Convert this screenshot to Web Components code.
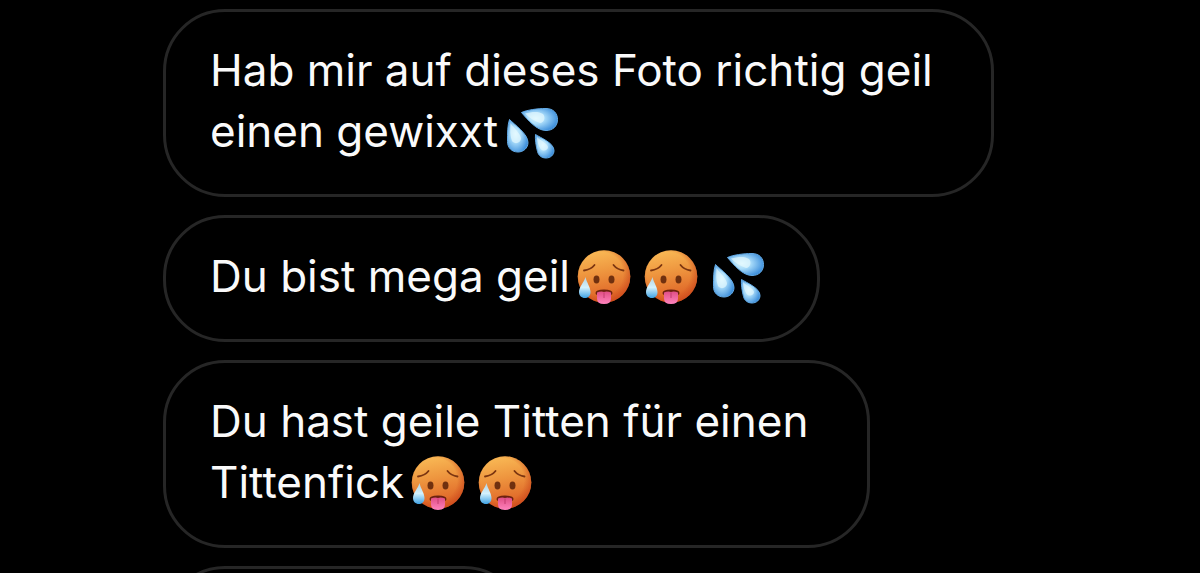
<!DOCTYPE html>
<html lang="de">
<head>
<meta charset="utf-8">
<meta name="viewport" content="width=device-width, initial-scale=1">
<title>Chat</title>
<style>
  body {
    margin: 0;
    background: #000;
    color: #fafafa;
    font-family: Inter, "Liberation Sans", sans-serif;
    overflow: hidden;
  }
</style>
</head>
<body>
<message-list>
  <message-bubble>Hab mir auf dieses Foto richtig geil&nbsp;<br>einen gewixxt<chat-emoji name="drops"></chat-emoji></message-bubble>
  <message-bubble>Du bist mega geil<chat-emoji name="hot"></chat-emoji><chat-emoji name="hot"></chat-emoji><chat-emoji name="drops"></chat-emoji></message-bubble>
  <message-bubble>Du hast geile Titten für einen&nbsp;<br>Tittenfick<chat-emoji name="hot"></chat-emoji><chat-emoji name="hot"></chat-emoji></message-bubble>
  <message-bubble class="next"></message-bubble>
</message-list>

<script>
const emojis = {
  hot: {
    label: '🥵',
    svg: /*html*/ `
      <defs>
        <linearGradient id="skin" x1="0.4" y1="0" x2="0.6" y2="1">
          <stop offset="0" stop-color="#f9b955" />
          <stop offset="0.4" stop-color="#ee963f" />
          <stop offset="1" stop-color="#dc5a22" />
        </linearGradient>
        <radialGradient id="rim" cx="0.45" cy="0.45" r="0.55">
          <stop offset="0.75" stop-color="#c8441a" stop-opacity="0" />
          <stop offset="1" stop-color="#c8441a" stop-opacity="0.55" />
        </radialGradient>
        <linearGradient id="tongue" x1="0" y1="0" x2="0" y2="1">
          <stop offset="0" stop-color="#e04f86" />
          <stop offset="1" stop-color="#ff83bd" />
        </linearGradient>
        <linearGradient id="sweat" x1="0" y1="0" x2="0" y2="1">
          <stop offset="0" stop-color="#b5d3e0" />
          <stop offset="0.5" stop-color="#d3f1fd" />
          <stop offset="1" stop-color="#3fa2e4" />
        </linearGradient>
      </defs>
      <circle cx="27" cy="26.500" r="26.300" fill="url(#skin)" />
      <circle cx="27" cy="26.500" r="26.300" fill="url(#rim)" />
      <path d="M7 20.500Q14 19.500 17.500 15M36.500 15Q40 19.500 46.500 20.500" fill="none" stroke="#7b3511" stroke-width="1.800" stroke-linecap="round" />
      <ellipse cx="19.500" cy="29.500" rx="3" ry="3.900" fill="#70300f" />
      <ellipse cx="34.500" cy="29.500" rx="3" ry="3.900" fill="#70300f" />
      <path d="M18.500 43Q18.500 39.500 27 39.500T35.500 43Q35.500 45 33.500 45H20.500Q18.500 45 18.500 43Z" fill="#6c210e" />
      <path d="M20 42.500Q24 41 27 42Q30 41 34 42.500V48.500Q34 54 27 54T20 48.500Z" fill="url(#tongue)" />
      <path d="M27 42.500V48" stroke="#c43c70" stroke-width="1" />
      <path d="M8.500 27C9.500 32.500 13.500 37 13.500 42C13.500 46 11 48 7.800 48S2 45.800 2 42C2 37 7 32.500 8.500 27Z" fill="url(#sweat)" />`
  },
  drops: {
    label: '💦',
    svg: /*html*/ `
      <defs>
        <radialGradient id="water" cx="0.4" cy="0.45" r="0.62">
          <stop offset="0" stop-color="#d9f6ff" />
          <stop offset="0.4" stop-color="#a9dcfa" />
          <stop offset="1" stop-color="#3f90dc" />
        </radialGradient>
      </defs>
      <g fill="url(#water)" stroke="#62aae6" stroke-width="1">
        <path d="M16.500 7.500C22 5 32 3.500 41 3.500C48.500 3.500 52.500 8.500 52.500 14.500C52.500 21.500 47.500 25.500 41 25.500C31.500 25.500 23 15 16.500 7.500Z" />
        <path d="M4.500 14.500C10 20 23 29 23 37.500C23 43 18.500 47 13 47C6.500 47 2.500 42.500 2.500 36.500C2.500 29 2.500 20 4.500 14.500Z" />
        <path d="M30.500 29.500C36 33 49 38 49 45.500C49 50 45.500 53 41 53C36.500 53 33.500 50.500 32.500 46.500C31 41 30 34 30.500 29.500Z" />
      </g>
      <g fill="#e9fbff" opacity="0.65">
        <path d="M20 8.500C27 6.500 34 6 38 9C41 12 39 18 35 18C29 16 24 12.500 20 8.500Z" />
        <path d="M5.500 18C9 23 15 28 16 33C16 38 10 40 7 36C5 31 5 24 5.500 18Z" />
        <path d="M32 32C36 36 42 38 43 42C43 46 37 47 35 43C33 39 32 36 32 32Z" />
      </g>`
  }
};

class ChatEmoji extends HTMLElement {
  constructor() {
    super();
    this.attachShadow({mode: 'open'});
  }

  connectedCallback() {
    const {label, svg} = emojis[this.getAttribute('name')];
    this.shadowRoot.innerHTML = /*html*/ `
      <style>
        :host {
          display: inline-block;
          width: 54px;
          height: 54px;
          margin: 0 6px 0 7px;
          vertical-align: -12px;
        }

        svg {
          display: block;
          width: 100%;
          height: 100%;
        }
      </style>
      <svg viewBox="0 0 54 54" role="img" aria-label="${label}">${svg}</svg>
    `;
  }
}

class MessageBubble extends HTMLElement {
  constructor() {
    super();
    this.attachShadow({mode: 'open'});
    this.shadowRoot.innerHTML = /*html*/ `
      <style>
        :host {
          display: block;
          box-sizing: border-box;
          max-width: 90%;
          min-height: 127px;
          padding: 28px 46px 32px 44px;
          border: 3px solid #262626;
          border-radius: 62px;
          font-size: 44px;
          line-height: 61px;
        }

        :host(.next) {
          width: 35%;
        }
      </style>
      <slot></slot>
    `;
  }
}

class MessageList extends HTMLElement {
  constructor() {
    super();
    this.attachShadow({mode: 'open'});
    this.shadowRoot.innerHTML = /*html*/ `
      <style>
        :host {
          display: flex;
          flex-direction: column;
          align-items: flex-start;
          gap: 18px;
          height: 100vh;
          box-sizing: border-box;
          padding: 9px 0 0 163px;
          overflow: hidden;
        }

        ::slotted(*) {
          flex-shrink: 0;
        }
      </style>
      <slot></slot>
    `;
  }
}

customElements.define('chat-emoji', ChatEmoji);
customElements.define('message-bubble', MessageBubble);
customElements.define('message-list', MessageList);
</script>
</body>
</html>
